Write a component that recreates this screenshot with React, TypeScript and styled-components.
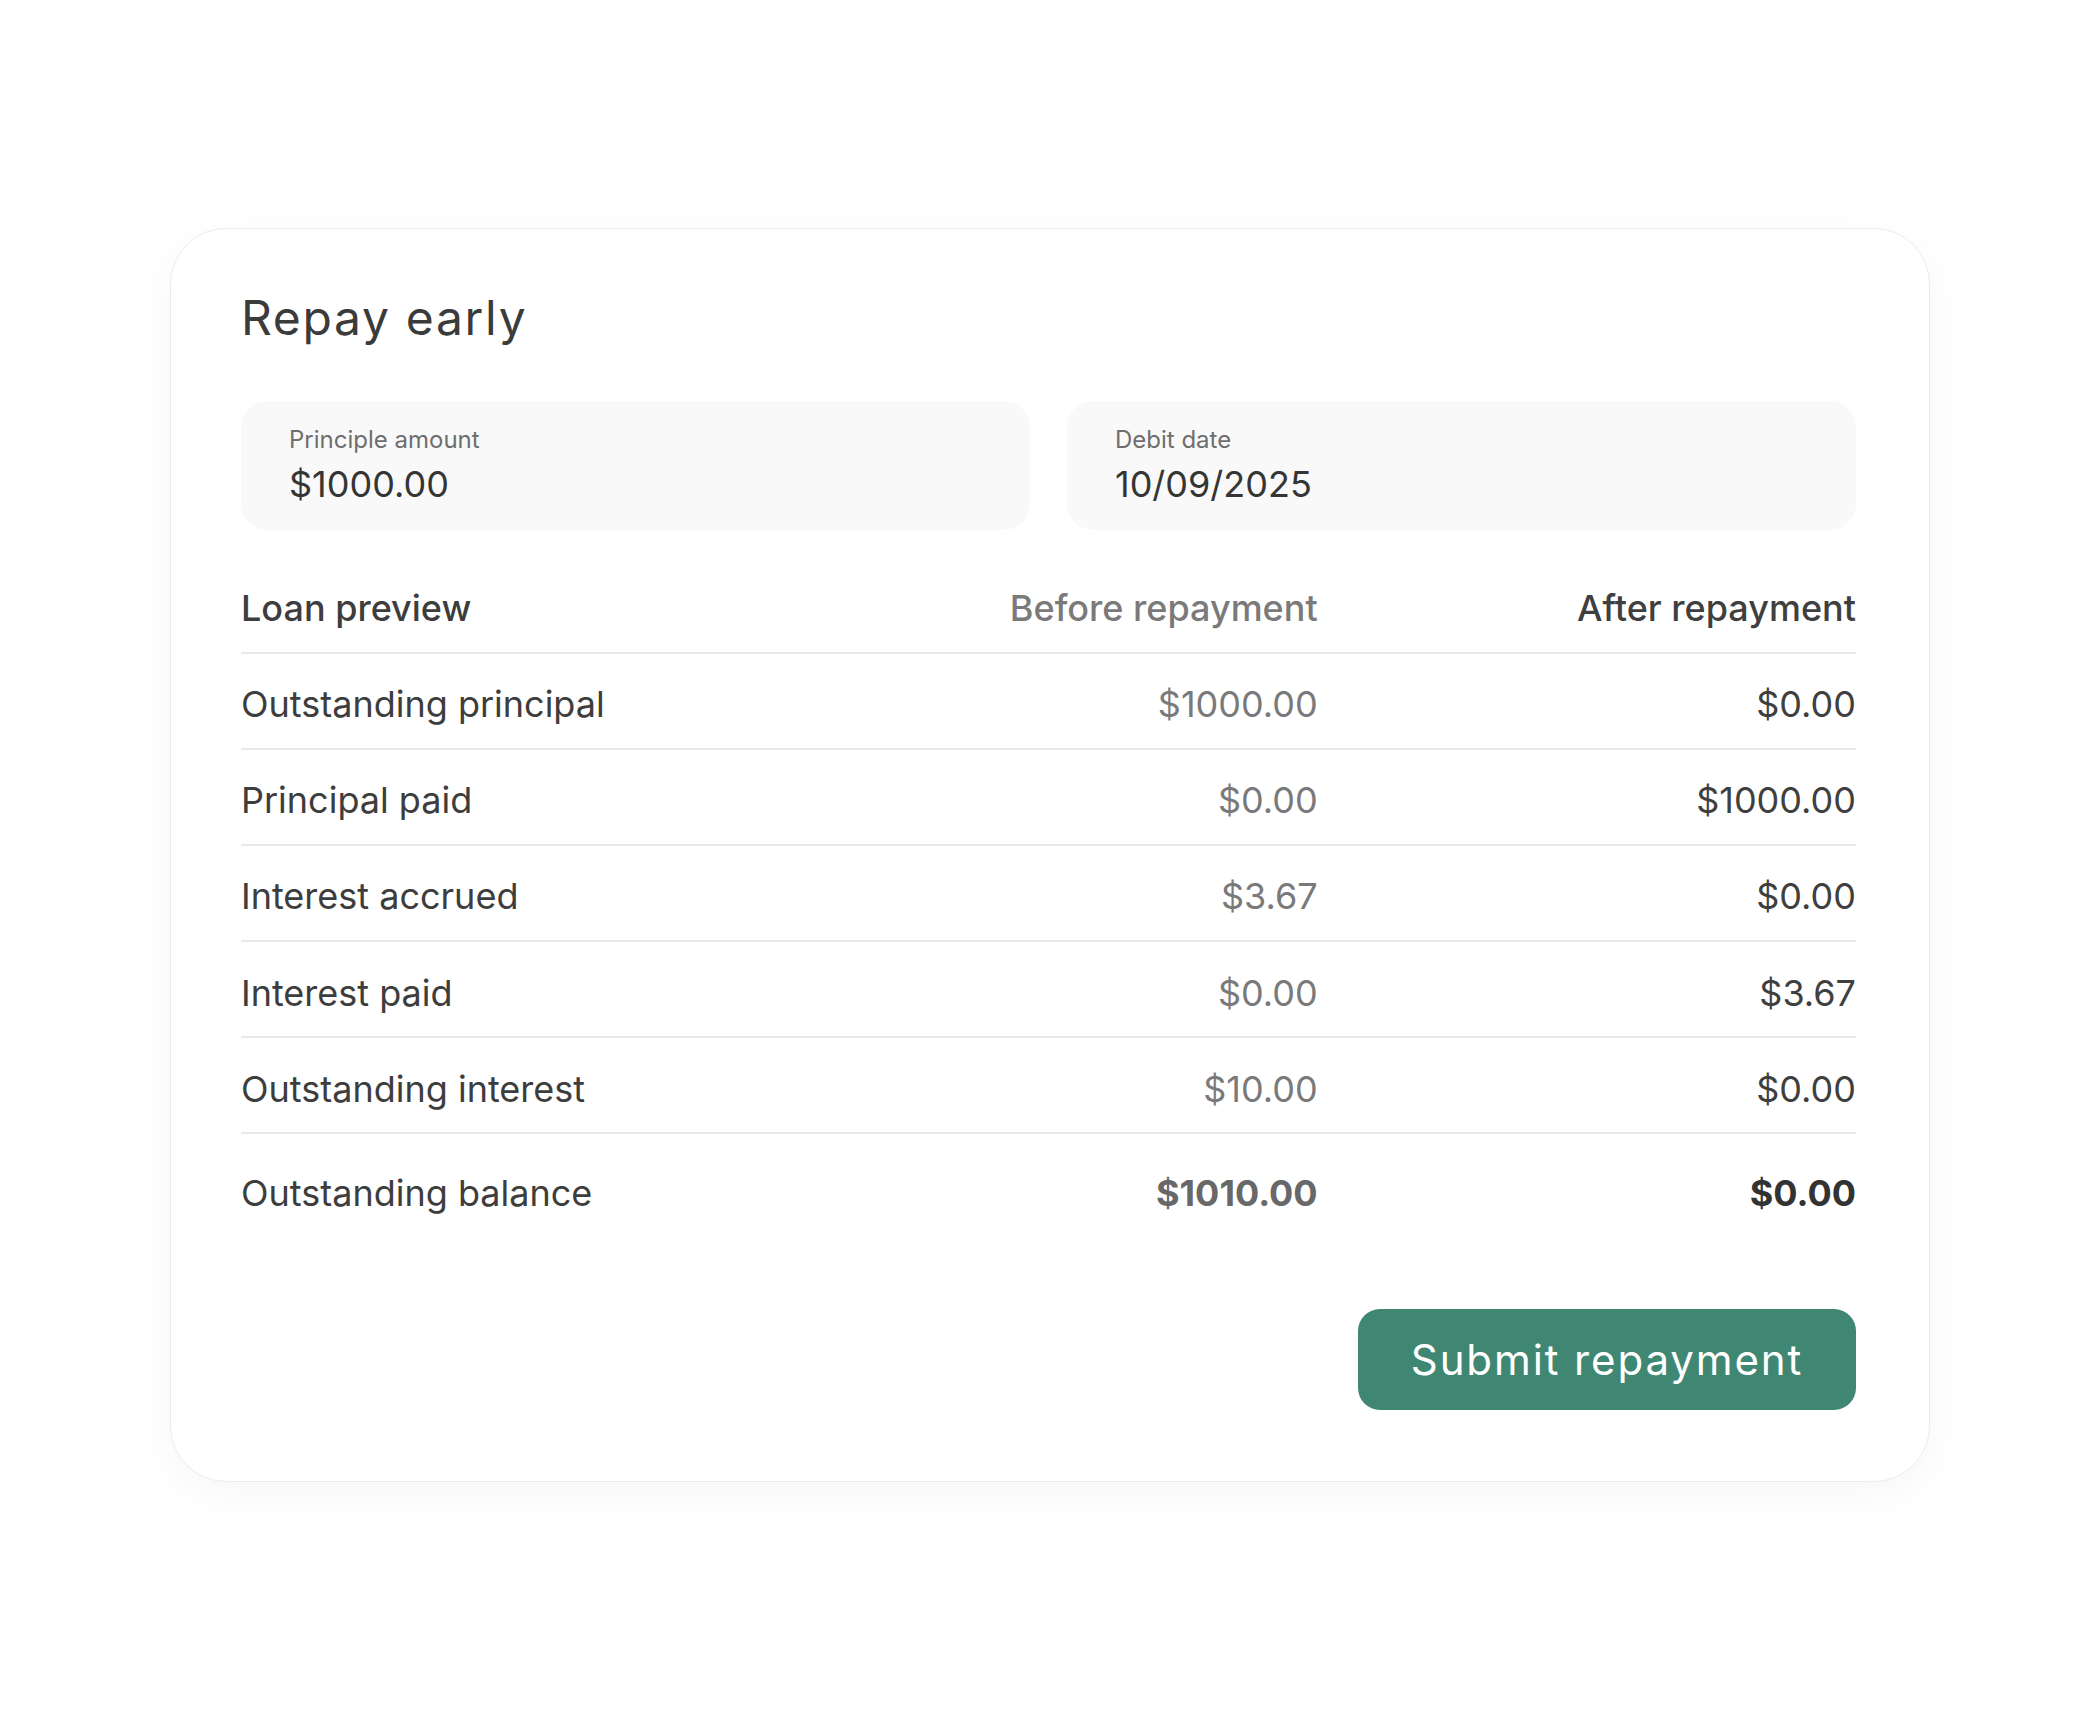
import React from "react";
import styled, { createGlobalStyle } from "styled-components";

type Tone = "label" | "before" | "after";

type PreviewRow = {
  label: string;
  before: string;
  after: string;
};

const rows: PreviewRow[] = [
  { label: "Outstanding principal", before: "$1000.00", after: "$0.00" },
  { label: "Principal paid", before: "$0.00", after: "$1000.00" },
  { label: "Interest accrued", before: "$3.67", after: "$0.00" },
  { label: "Interest paid", before: "$0.00", after: "$3.67" },
  { label: "Outstanding interest", before: "$10.00", after: "$0.00" },
];

const App = () => {
  return (
    <>
      <GlobalStyle />
      <Page>
        <Card>
          <Title>Repay early</Title>

          <Fields>
            <Field>
              <FieldLabel>Principle amount</FieldLabel>
              <FieldValue>$1000.00</FieldValue>
            </Field>
            <Field>
              <FieldLabel>Debit date</FieldLabel>
              <FieldValue>10/09/2025</FieldValue>
            </Field>
          </Fields>

          <Table>
            <Row $head>
              <Cell $tone="label" $strong>
                Loan preview
              </Cell>
              <Cell $tone="before" $strong>
                Before repayment
              </Cell>
              <Cell $tone="after" $strong>
                After repayment
              </Cell>
            </Row>
            {rows.map((row) => (
              <Row key={row.label}>
                <Cell $tone="label">{row.label}</Cell>
                <Cell $tone="before">{row.before}</Cell>
                <Cell $tone="after">{row.after}</Cell>
              </Row>
            ))}
            <Row $total>
              <Cell $tone="label">Outstanding balance</Cell>
              <Cell $tone="before" $bold>
                $1010.00
              </Cell>
              <Cell $tone="after" $bold>
                $0.00
              </Cell>
            </Row>
          </Table>

          <Actions>
            <SubmitButton type="button">Submit repayment</SubmitButton>
          </Actions>
        </Card>
      </Page>
    </>
  );
};

export default App;

const GlobalStyle = createGlobalStyle`
  html, body {
    margin: 0;
    padding: 0;
    background: #ffffff;
  }

  body {
    font-family: Inter, "Noto Sans", "Liberation Sans", sans-serif;
    -webkit-font-smoothing: antialiased;
  }

  * {
    box-sizing: border-box;
  }
`;

const Page = styled.div`
  min-height: 100vh;
  display: flex;
  align-items: center;
  justify-content: center;
`;

const Card = styled.div`
  width: 1760px;
  display: flex;
  flex-direction: column;
  padding: 65px 73px 71px 70px;
  background: #ffffff;
  border: 1px solid #ececec;
  border-radius: 56px;
  box-shadow: 0 12px 44px rgba(0, 0, 0, 0.035);
`;

const Title = styled.h1`
  margin: 0;
  font-family: Inter, "Liberation Sans", sans-serif;
  font-size: 48px;
  font-weight: 400;
  line-height: 1;
  letter-spacing: 0.035em;
  color: #3b3b3b;
`;

const Fields = styled.div`
  display: grid;
  grid-template-columns: 1fr 1fr;
  gap: 37px;
  margin-top: 59px;
`;

const Field = styled.div`
  display: flex;
  flex-direction: column;
  gap: 8px;
  padding: 25px 48px 24px;
  background: #f9f9f9;
  border-radius: 26px;
`;

const FieldLabel = styled.span`
  font-size: 24px;
  line-height: 1.2;
  color: #6e6e6e;
`;

const FieldValue = styled.span`
  font-size: 36px;
  line-height: 1.2;
  color: #353535;
`;

const Table = styled.div`
  display: flex;
  flex-direction: column;
  margin-top: 57px;
`;

const Row = styled.div<{ $head?: boolean; $total?: boolean }>`
  display: grid;
  grid-template-columns: repeat(3, 1fr);
  align-items: center;
  padding: ${(p) =>
    p.$head ? "0 0 21.5px" : p.$total ? "37.5px 0 0" : "29.5px 0 21.5px"};
  border-bottom: ${(p) => (p.$total ? "none" : "2px solid #e8e8e8")};
`;

const toneColor: Record<Tone, string> = {
  label: "#3d3d3d",
  before: "#7a7a7a",
  after: "#3f3f3f",
};

const Cell = styled.div<{ $tone: Tone; $strong?: boolean; $bold?: boolean }>`
  font-size: 36px;
  line-height: 1.2;
  font-weight: ${(p) => (p.$bold ? 700 : p.$strong ? 500 : 400)};
  text-align: ${(p) => (p.$tone === "label" ? "left" : "right")};
  color: ${(p) =>
    p.$bold && p.$tone === "before"
      ? "#686868"
      : p.$bold
        ? "#333333"
        : toneColor[p.$tone]};
`;

const Actions = styled.div`
  display: flex;
  justify-content: flex-end;
  margin-top: 94px;
`;

const SubmitButton = styled.button`
  width: 498px;
  height: 101px;
  border: none;
  border-radius: 22px;
  background: #3f8772;
  color: #ffffff;
  font-family: Inter, "Liberation Sans", sans-serif;
  font-size: 42px;
  font-weight: 400;
  letter-spacing: 0.045em;
  cursor: pointer;
`;
